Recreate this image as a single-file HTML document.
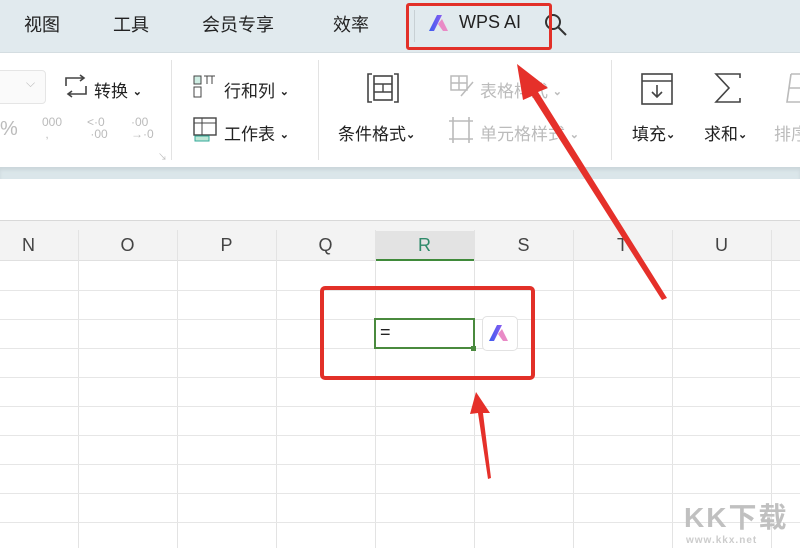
<!DOCTYPE html>
<html><head><meta charset="utf-8"><style>
*{margin:0;padding:0;box-sizing:border-box}
body{width:800px;height:548px;overflow:hidden;background:#fff;font-family:"Liberation Sans","Noto Sans CJK SC",sans-serif;position:relative;color:#333}
.a{position:absolute;white-space:nowrap}
.top{left:0;top:0;width:800px;height:52px;background:#e1eaee}
.tab{top:11px;font-size:18px;color:#222}
.rib{left:0;top:52px;width:800px;height:116px;background:#fff;border-top:1px solid #d4dde1}
.band{left:0;top:167px;width:800px;height:12px;background:#dbe6ea;box-shadow:inset 0 3px 3px #cbd6da}
.t{font-size:17px;color:#222}
.g{color:#bbb}
.c{font-size:11px;font-weight:bold;vertical-align:2px}
.sep{width:1px;background:#e3e3e3}
.hdr{left:0;top:220px;width:800px;height:41px;background:#f3f3f3;border-top:1px solid #d8d8d8;border-bottom:1px solid #e0e0e0}
.cl{top:235px;font-size:18px;color:#444;width:99px;text-align:center}
.vl{top:230px;width:1px;height:318px;background:#e3e3e3}
.hl{left:0;width:800px;height:1px;background:#e6e6e6}
</style></head><body>
<div class="a top"></div>
<div class="a tab" style="left:24px">视图</div>
<div class="a tab" style="left:113px">工具</div>
<div class="a tab" style="left:202px">会员专享</div>
<div class="a tab" style="left:333px">效率</div>
<div class="a" style="left:414px;top:10px;width:1px;height:32px;background:#c8d0d4"></div>
<svg class="a" style="left:428px;top:13px" width="26" height="20" viewBox="0 0 26 20"><defs><linearGradient id="g1" x1="0" x2="1"><stop offset="0" stop-color="#3a5cf0"/><stop offset="1" stop-color="#8a5cf0"/></linearGradient></defs><path d="M1 18 L9 2 L14 2 L6 18Z" fill="url(#g1)"/><path d="M10 11 L14 6 L20 18 L15 18Z" fill="#e98ac6"/></svg>
<div class="a tab" style="left:459px;top:12px;font-size:18px">WPS AI</div>
<svg class="a" style="left:543px;top:11px" width="26" height="26"><circle cx="10" cy="11" r="7" fill="none" stroke="#333" stroke-width="2"/><path d="M15 16 L23 24" stroke="#333" stroke-width="2"/></svg>
<div class="a" style="left:406px;top:3px;width:146px;height:47px;border:3px solid #e23028;border-radius:3px"></div>

<div class="a rib"></div>
<div class="a" style="left:-10px;top:70px;width:56px;height:34px;border:1px solid #e5e5e5;border-radius:4px;background:#fafafa"></div>
<div class="a g" style="left:26px;top:76px;font-size:12px">⌵</div>
<svg class="a" style="left:62px;top:74px" width="28" height="26"><path d="M4 12V4H22M18 1l4 3-4 3M24 12v8H6M10 17l-4 3 4 3" fill="none" stroke="#444" stroke-width="1.6"/></svg>
<div class="a t" style="left:94px;top:77px">转换 <span class="c">⌄</span></div>
<div class="a g" style="left:0;top:118px;font-size:20px">%</div>
<div class="a g" style="left:42px;top:116px;font-size:12px;line-height:12px">000<br>&nbsp;,</div>
<div class="a g" style="left:87px;top:116px;font-size:12px;line-height:12px">&lt;·0<br>&nbsp;·00</div>
<div class="a g" style="left:131px;top:116px;font-size:12px;line-height:12px">·00<br>→·0</div>
<div class="a g" style="left:158px;top:150px;font-size:9px">↘</div>
<div class="a sep" style="left:171px;top:60px;height:100px"></div>
<svg class="a" style="left:192px;top:74px" width="26" height="26"><rect x="2" y="2" width="7" height="8" fill="#cfeee4" stroke="#444"/><rect x="2" y="13" width="7" height="10" fill="none" stroke="#444"/><path d="M12 2h11M15 2v8M20 2v8" stroke="#444" fill="none"/></svg>
<div class="a t" style="left:224px;top:77px">行和列 <span class="c">⌄</span></div>
<svg class="a" style="left:192px;top:116px" width="26" height="28"><rect x="2" y="2" width="22" height="17" fill="none" stroke="#444" stroke-width="1.4"/><path d="M2 7h22M10 2v17" stroke="#444"/><rect x="3" y="20" width="14" height="5" fill="#bfe7d6" stroke="#3a9"/></svg>
<div class="a t" style="left:224px;top:120px">工作表 <span class="c">⌄</span></div>
<div class="a sep" style="left:318px;top:60px;height:100px"></div>
<svg class="a" style="left:366px;top:72px" width="34" height="32"><path d="M6 2H2v28h4M28 2h4v28h-4" fill="none" stroke="#444" stroke-width="1.6"/><rect x="8" y="4" width="18" height="24" fill="none" stroke="#444" stroke-width="1.6"/><path d="M8 12h18M8 20h18M17 12v8" stroke="#444" stroke-width="1.4"/></svg>
<div class="a t" style="left:338px;top:120px">条件格式<span class="c">⌄</span></div>
<svg class="a" style="left:449px;top:74px" width="28" height="26"><rect x="2" y="2" width="16" height="14" fill="none" stroke="#bbb" stroke-width="1.5"/><path d="M2 9h16M10 2v14M12 22l12-14" stroke="#bbb" stroke-width="1.5"/></svg>
<div class="a t g" style="left:480px;top:77px">表格样式 <span class="c">⌄</span></div>
<svg class="a" style="left:448px;top:116px" width="26" height="28"><path d="M5 1v26M21 1v26M1 5h24M1 23h24" stroke="#bbb" stroke-width="1.6"/></svg>
<div class="a t g" style="left:480px;top:120px">单元格样式 <span class="c">⌄</span></div>
<div class="a sep" style="left:611px;top:60px;height:100px"></div>
<svg class="a" style="left:640px;top:72px" width="34" height="34"><rect x="2" y="2" width="30" height="30" fill="none" stroke="#444" stroke-width="1.6"/><path d="M2 9h30M17 13v12M12 20l5 5 5-5" fill="none" stroke="#444" stroke-width="1.6"/></svg>
<div class="a t" style="left:632px;top:120px">填充<span class="c">⌄</span></div>
<svg class="a" style="left:713px;top:72px" width="30" height="32"><path d="M27 6V2H3l13 14L3 30h24v-4" fill="none" stroke="#444" stroke-width="1.6"/></svg>
<div class="a t" style="left:704px;top:120px">求和<span class="c">⌄</span></div>
<svg class="a" style="left:785px;top:72px" width="20" height="32"><path d="M6 2h14M6 2L2 30h18M4 16h16" fill="none" stroke="#bbb" stroke-width="1.6"/></svg>
<div class="a t g" style="left:774px;top:120px">排序</div>
<div class="a band"></div>

<div class="a hdr"></div>
<div class="a" style="left:375px;top:231px;width:99px;height:30px;background:#e3e3e3;border-bottom:2px solid #3f8a3a"></div>
<div class="a cl" style="left:-21px">N</div>
<div class="a cl" style="left:78px">O</div>
<div class="a cl" style="left:177px">P</div>
<div class="a cl" style="left:276px">Q</div>
<div class="a cl" style="left:375px;color:#2f8a6a">R</div>
<div class="a cl" style="left:474px">S</div>
<div class="a cl" style="left:573px">T</div>
<div class="a cl" style="left:672px">U</div>
<div class="a vl" style="left:78px"></div><div class="a vl" style="left:177px"></div><div class="a vl" style="left:276px"></div><div class="a vl" style="left:375px"></div><div class="a vl" style="left:474px"></div><div class="a vl" style="left:573px"></div><div class="a vl" style="left:672px"></div><div class="a vl" style="left:771px"></div>
<div class="a hl" style="top:290px"></div><div class="a hl" style="top:319px"></div><div class="a hl" style="top:348px"></div><div class="a hl" style="top:377px"></div><div class="a hl" style="top:406px"></div><div class="a hl" style="top:435px"></div><div class="a hl" style="top:464px"></div><div class="a hl" style="top:493px"></div><div class="a hl" style="top:522px"></div>
<div class="a" style="left:374px;top:318px;width:101px;height:31px;border:2px solid #4a8a3e;background:#fff"></div>
<div class="a" style="left:471px;top:346px;width:5px;height:5px;background:#4a8a3e"></div>
<div class="a" style="left:380px;top:322px;font-size:18px;color:#222">=</div>
<div class="a" style="left:482px;top:316px;width:36px;height:35px;border:1px solid #e2e2e2;border-radius:5px;background:#fff"></div>
<svg class="a" style="left:488px;top:322px" width="26" height="22" viewBox="0 0 26 20"><path d="M1 18 L9 2 L14 2 L6 18Z" fill="url(#g1)"/><path d="M10 11 L14 6 L20 18 L15 18Z" fill="#e98ac6"/></svg>
<div class="a" style="left:320px;top:286px;width:215px;height:94px;border:4px solid #e23028;border-radius:5px"></div>

<svg class="a" style="left:0;top:0" width="800" height="548"><path d="M517 64 L548 88 L538 92 L667 298 L662 300 L532 96 L523 100Z" fill="#e5302a"/><path d="M476 392 L490 413 L483 413 L491 478 L488 479 L478 413 L470 414Z" fill="#e5302a"/></svg>

<div class="a" style="left:684px;top:496px;font-size:28px;font-weight:bold;color:#c0c0c0;letter-spacing:2px">KK下载</div>
<div class="a" style="left:686px;top:535px;font-size:10px;font-weight:bold;color:#ccc;letter-spacing:1px">www.kkx.net</div>
</body></html>
